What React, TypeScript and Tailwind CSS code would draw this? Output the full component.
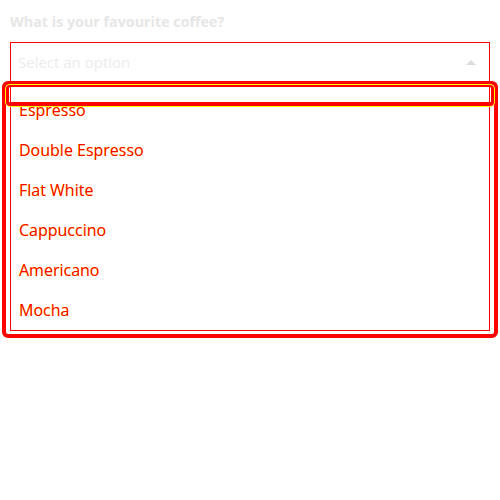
import React from "react";

const options = ["Espresso", "Double Espresso", "Flat White", "Cappuccino", "Americano", "Mocha"];

export default function App() {
  return (
    <div className="w-[500px] h-[500px] bg-white px-[10px] pt-3 font-['Open_Sans',sans-serif]">
      <label className="block text-[14.3px] leading-5 font-bold text-[#e6e6e6]">What is your favourite coffee?</label>
      <div className="relative mt-[10px]">
        <div className="flex h-10 items-center justify-between border border-[#ff0000] pl-[7px] pr-[13px]">
          <span className="text-[15px] text-[#ececec]">Select an option</span>
          <svg width="10" height="5" viewBox="0 0 10 5" className="block">
            <path d="M0 5 L5 0 L10 5 Z" fill="#dcdcdc" />
          </svg>
        </div>
        <div className="absolute left-[-8px] right-[-8px] top-[39px] rounded-md border-4 border-[#ff0000] pb-[3px]">
          <div className="mx-1 border border-[#ff0000] pt-1">
            {options.map((o) => (
              <div
                key={o}
                className="flex h-10 items-center px-2 text-base text-[#ff0000] [text-shadow:0_0_0.6px_#ffff00]"
              >
                {o}
              </div>
            ))}
          </div>
          <div className="absolute left-0 right-0 top-0 h-[21px] rounded-[4px] border-x-[3px] border-t-2 border-b-4 border-[#ff0000] ring-1 ring-[#ffff00]" />
        </div>
      </div>
    </div>
  );
}
